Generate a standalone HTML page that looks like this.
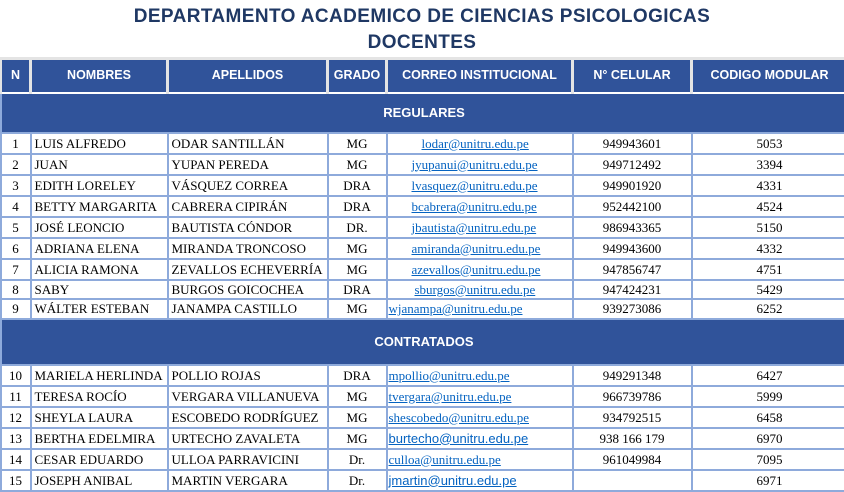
<!DOCTYPE html>
<html><head><meta charset="utf-8"><style>
body{margin:0;width:844px;height:489px;overflow:hidden;background:#fff;font-family:"Liberation Serif",serif;}
.t{position:absolute;left:0;width:844px;text-align:center;color:#1f3864;font-family:"Liberation Sans",sans-serif;font-weight:bold;font-size:19px;letter-spacing:0.4px}
table{position:absolute;left:-1px;top:57px;border-collapse:collapse;table-layout:fixed;width:847px}
td{border:2px solid #8eaadb;padding:0 3px;font-size:13px;color:#000;white-space:nowrap;overflow:hidden;line-height:15px}
tr.h td{background:#30539a;color:#fff;font-family:"Liberation Sans",sans-serif;font-weight:bold;font-size:12.5px;text-align:center;border:3px solid #e4e4e4;border-bottom:2px solid #fff}
tr.b td{background:#30539a;color:#fff;font-family:"Liberation Sans",sans-serif;font-weight:bold;font-size:13px;text-align:center;border-color:#8eaadb}
.c{text-align:center}
a{color:#0563c1;text-decoration:underline}
.s{font-family:"Liberation Sans",sans-serif;font-size:13px}
</style></head><body>
<div class="t" style="top:6px">DEPARTAMENTO ACADEMICO DE CIENCIAS PSICOLOGICAS</div>
<div class="t" style="top:32px">DOCENTES</div>
<table>
<colgroup><col style="width:30px"><col style="width:137px"><col style="width:160px"><col style="width:59px"><col style="width:186px"><col style="width:119px"><col style="width:156px"></colgroup>
<tr class="h" style="height:34px"><td>N</td><td>NOMBRES</td><td>APELLIDOS</td><td>GRADO</td><td>CORREO INSTITUCIONAL</td><td>N° CELULAR</td><td>CODIGO MODULAR</td></tr>
<tr class="b" style="height:40px"><td colspan="7">REGULARES</td></tr>
<tr style="height:21px"><td class="c">1</td><td>LUIS ALFREDO</td><td>ODAR SANTILLÁN</td><td class="c">MG</td><td style="padding-left:34px"><a>lodar@unitru.edu.pe</a></td><td class="c">949943601</td><td class="c">5053</td></tr>
<tr style="height:21px"><td class="c">2</td><td>JUAN</td><td>YUPAN PEREDA</td><td class="c">MG</td><td style="padding-left:24px"><a>jyupanui@unitru.edu.pe</a></td><td class="c">949712492</td><td class="c">3394</td></tr>
<tr style="height:21px"><td class="c">3</td><td>EDITH LORELEY</td><td>VÁSQUEZ CORREA</td><td class="c">DRA</td><td style="padding-left:24px"><a>lvasquez@unitru.edu.pe</a></td><td class="c">949901920</td><td class="c">4331</td></tr>
<tr style="height:21px"><td class="c">4</td><td>BETTY MARGARITA</td><td>CABRERA CIPIRÁN</td><td class="c">DRA</td><td style="padding-left:24px"><a>bcabrera@unitru.edu.pe</a></td><td class="c">952442100</td><td class="c">4524</td></tr>
<tr style="height:21px"><td class="c">5</td><td>JOSÉ LEONCIO</td><td>BAUTISTA CÓNDOR</td><td class="c">DR.</td><td style="padding-left:24px"><a>jbautista@unitru.edu.pe</a></td><td class="c">986943365</td><td class="c">5150</td></tr>
<tr style="height:21px"><td class="c">6</td><td>ADRIANA ELENA</td><td>MIRANDA TRONCOSO</td><td class="c">MG</td><td style="padding-left:24px"><a>amiranda@unitru.edu.pe</a></td><td class="c">949943600</td><td class="c">4332</td></tr>
<tr style="height:21px"><td class="c">7</td><td>ALICIA RAMONA</td><td>ZEVALLOS ECHEVERRÍA</td><td class="c">MG</td><td style="padding-left:24px"><a>azevallos@unitru.edu.pe</a></td><td class="c">947856747</td><td class="c">4751</td></tr>
<tr style="height:19px"><td class="c">8</td><td>SABY</td><td>BURGOS GOICOCHEA</td><td class="c">DRA</td><td style="padding-left:27px"><a>sburgos@unitru.edu.pe</a></td><td class="c">947424231</td><td class="c">5429</td></tr>
<tr style="height:20px"><td class="c">9</td><td>WÁLTER ESTEBAN</td><td>JANAMPA CASTILLO</td><td class="c">MG</td><td style="padding-left:1px"><a>wjanampa@unitru.edu.pe</a></td><td class="c">939273086</td><td class="c">6252</td></tr>
<tr class="b" style="height:46px"><td colspan="7">CONTRATADOS</td></tr>
<tr style="height:21px"><td class="c">10</td><td>MARIELA HERLINDA</td><td>POLLIO ROJAS</td><td class="c">DRA</td><td style="padding-left:1px"><a>mpollio@unitru.edu.pe</a></td><td class="c">949291348</td><td class="c">6427</td></tr>
<tr style="height:21px"><td class="c">11</td><td>TERESA ROCÍO</td><td>VERGARA VILLANUEVA</td><td class="c">MG</td><td style="padding-left:1px"><a>tvergara@unitru.edu.pe</a></td><td class="c">966739786</td><td class="c">5999</td></tr>
<tr style="height:21px"><td class="c">12</td><td>SHEYLA LAURA</td><td>ESCOBEDO RODRÍGUEZ</td><td class="c">MG</td><td style="padding-left:1px"><a>shescobedo@unitru.edu.pe</a></td><td class="c">934792515</td><td class="c">6458</td></tr>
<tr style="height:21px"><td class="c">13</td><td>BERTHA EDELMIRA</td><td>URTECHO ZAVALETA</td><td class="c">MG</td><td style="padding-left:1px" class="s"><a>burtecho@unitru.edu.pe</a></td><td class="c">938 166 179</td><td class="c">6970</td></tr>
<tr style="height:21px"><td class="c">14</td><td>CESAR EDUARDO</td><td>ULLOA PARRAVICINI</td><td class="c">Dr.</td><td style="padding-left:1px"><a>culloa@unitru.edu.pe</a></td><td class="c">961049984</td><td class="c">7095</td></tr>
<tr style="height:21px"><td class="c">15</td><td>JOSEPH ANIBAL</td><td>MARTIN VERGARA</td><td class="c">Dr.</td><td style="padding-left:1px" class="s"><a>jmartin@unitru.edu.pe</a></td><td class="c"></td><td class="c">6971</td></tr>
</table>
</body></html>
